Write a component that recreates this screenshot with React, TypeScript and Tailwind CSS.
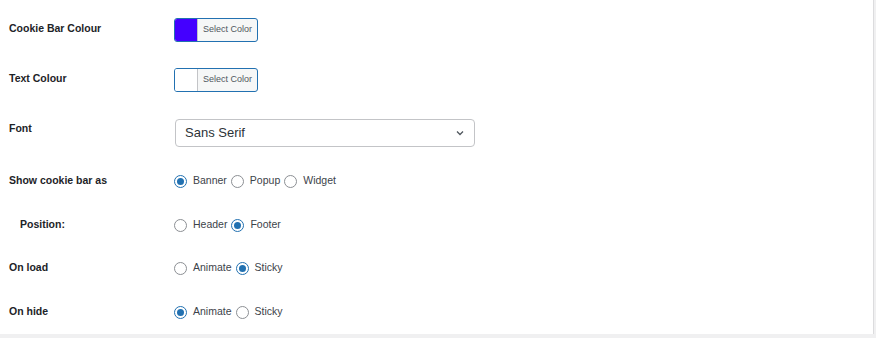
import React from 'react';

const font = { fontFamily: '"Liberation Sans", Arial, sans-serif' };

function Radio({ checked, label }: { checked?: boolean; label: string }) {
  return (
    <label className="flex items-center">
      <span
        className={`flex h-[13px] w-[13px] items-center justify-center rounded-full border bg-white ${
          checked ? 'border-[#2271b1]' : 'border-[#8c8f94]'
        }`}
      >
        {checked && <span className="h-[7px] w-[7px] rounded-full bg-[#2271b1]" />}
      </span>
      <span className="ml-[6px] mr-[4px] text-[10.5px] text-[#3c434a]">{label}</span>
    </label>
  );
}

function ColorButton({ color }: { color: string }) {
  return (
    <button className="mt-[2px] flex h-[24px] w-[84px] overflow-hidden rounded-[3px] border border-[#2271b1] bg-[#f6f7f7]">
      <span className="h-full w-[23px] border-r border-[#c3c4c7]" style={{ background: color }} />
      <span className="flex flex-1 items-center justify-center text-[9px] text-[#50575e]">
        Select Color
      </span>
    </button>
  );
}

function Row({
  label,
  height,
  indent,
  children,
}: {
  label: string;
  height: string;
  indent?: boolean;
  children: React.ReactNode;
}) {
  return (
    <div className={`flex items-center ${height}`}>
      <div
        className={`w-[174px] shrink-0 text-[10.5px] font-bold text-[#1d2327] ${
          indent ? 'pl-[20px]' : 'pl-[9px]'
        }`}
      >
        {label}
      </div>
      <div className="flex items-center">{children}</div>
    </div>
  );
}

export default function App() {
  return (
    <div className="h-[338px] w-[876px] bg-[#f0f0f1]" style={font}>
      <div className="h-[334px] w-[874px] border-r border-[#dcdcde] bg-white">
        <Row label="Cookie Bar Colour" height="h-[57px]">
          <ColorButton color="#4400ff" />
        </Row>
        <Row label="Text Colour" height="h-[43px]">
          <ColorButton color="#ffffff" />
        </Row>
        <Row label="Font" height="h-[57px]">
          <div className="ml-[1px] mt-[8px] flex h-[28px] w-[300px] items-center justify-between rounded-[4px] border border-[#c3c4c7] bg-white pl-[9px] pr-[9px]">
            <span className="text-[13px] text-[#2c3338]">Sans Serif</span>
            <svg width="10" height="10" viewBox="0 0 10 10" fill="none">
              <path d="M2 3.5 L5 6.5 L8 3.5" stroke="#50575e" strokeWidth="1.3" />
            </svg>
          </div>
        </Row>
        <Row label="Show cookie bar as" height="h-[48px]">
          <Radio checked label="Banner" />
          <Radio label="Popup" />
          <Radio label="Widget" />
        </Row>
        <Row label="Position:" height="h-[40px]" indent>
          <Radio label="Header" />
          <Radio checked label="Footer" />
        </Row>
        <Row label="On load" height="h-[46px]">
          <Radio label="Animate" />
          <Radio checked label="Sticky" />
        </Row>
        <Row label="On hide" height="h-[42px]">
          <Radio checked label="Animate" />
          <Radio label="Sticky" />
        </Row>
      </div>
    </div>
  );
}
